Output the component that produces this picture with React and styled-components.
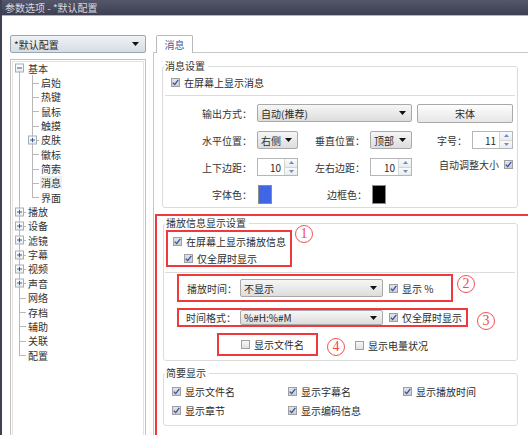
import React from 'react';
import styled, { createGlobalStyle } from 'styled-components';

const RED = '#ee3a3d';

const GlobalStyle = createGlobalStyle`
  html, body { margin: 0; padding: 0; background: #fff; overflow: hidden; }
  body {
    font-family: "Noto Sans CJK SC", "Noto Sans", sans-serif;
    font-size: 10px;
    color: #2b2b2b;
  }
  * { box-sizing: border-box; }
`;

const Window = styled.div`
  width: 528px;
  height: 435px;
  overflow: hidden;
  display: flex;
  flex-direction: column;
  border-left: 2px solid #3d4050;
  background: #fff;
`;

const TitleBar = styled.div`
  height: 16px;
  flex: none;
  padding-left: 3px;
  line-height: 15px;
  color: #d6d8e0;
  background: linear-gradient(#54576b, #3d4051);
  border-bottom: 1px solid #b4b6bc;
  white-space: nowrap;
`;

const Body = styled.div`
  flex: 1;
  min-height: 0;
  display: flex;
  gap: 7px;
  padding: 19px 0 0 8px;
`;

/* ---------- sidebar ---------- */
const Sidebar = styled.div`
  width: 136px;
  flex: none;
  display: flex;
  flex-direction: column;
  gap: 6px;
  margin-bottom: -12px;
`;

const ProfileSelect = styled.div`
  height: 18px;
  flex: none;
  display: flex;
  align-items: center;
  justify-content: space-between;
  padding: 0 6px 0 3px;
  border: 1px solid #9aa6b2;
  border-radius: 2px;
  background: linear-gradient(#f0f3f7, #d5dce4);
  white-space: nowrap;
`;

const TreeBox = styled.div`
  flex: 1;
  border: 1px solid #c2c2c2;
  box-shadow: inset 0 0 0 1px #fff, inset 0 0 0 2px #e3e3e3;
  padding: 1px 0 0 2px;
`;

const TreeRow = styled.div`
  display: flex;
  align-items: center;
  height: 14.35px;
  white-space: nowrap;
  color: #333;
`;

const Gutter = styled.span`
  position: relative;
  width: 13px;
  height: 100%;
  flex: none;
  &::before {
    content: '';
    position: absolute;
    left: 6px;
    border-left: 1px solid #b8b8b8;
    top: ${(p) => (p.$v === 'bottom' ? '50%' : '0')};
    bottom: ${(p) => (p.$v === 'top' ? '50%' : '0')};
    display: ${(p) => (p.$v ? 'block' : 'none')};
  }
  &::after {
    content: '';
    position: absolute;
    left: 6px;
    right: 0;
    top: 50%;
    border-top: 1px solid #b8b8b8;
    display: ${(p) => (p.$stub ? 'block' : 'none')};
  }
`;

const Expander = styled.span`
  position: absolute;
  left: 2px;
  top: 50%;
  transform: translateY(-50%);
  width: 9px;
  height: 9px;
  border: 1px solid #a6acb4;
  background: linear-gradient(#ffffff, #e8ecf0);
  z-index: 1;
  display: flex;
  align-items: center;
  justify-content: center;
`;

const TreeLabel = styled.span`
  margin-left: 1px;
  padding: 0 1px;
  line-height: 13px;
  background: ${(p) => (p.$sel ? '#eceef2' : 'transparent')};
`;

/* ---------- main ---------- */
const Main = styled.div`
  flex: 1;
  min-width: 0;
  display: flex;
  flex-direction: column;
`;

const TabStrip = styled.div`
  display: flex;
  padding-left: 3px;
  flex: none;
`;

const Tab = styled.div`
  width: 37px;
  height: 18px;
  border: 1px solid #b9b9b9;
  border-bottom: none;
  border-radius: 2px 2px 0 0;
  background: #fff;
  color: #3a5f9c;
  display: flex;
  align-items: center;
  justify-content: center;
  margin-bottom: -1px;
  position: relative;
  z-index: 1;
`;

const TabPanel = styled.div`
  flex: 1;
  border-top: 1px solid #c6c6c6;
  border-left: 1px solid #c6c6c6;
  padding: 13px 0 0 8px;
  display: flex;
  flex-direction: column;
  align-items: flex-start;
`;

const Group = styled.section`
  width: ${(p) => p.$w}px;
  flex: none;
  border: 1px solid #dcdcdc;
  border-radius: 3px;
  padding-bottom: ${(p) => p.$pb || 0}px;
  margin-top: ${(p) => p.$mt || 0}px;
  display: flex;
  flex-direction: column;
  align-items: flex-start;
  background: #fff;
`;

const GroupTitle = styled.div`
  margin: -7px 0 0 1px;
  padding: 0 3px 0 1px;
  height: 12px;
  line-height: 12px;
  background: #fff;
  white-space: nowrap;
  color: #333;
`;

const Separator = styled.div`
  align-self: stretch;
  height: 1px;
  background: #dcdcdc;
  margin: ${(p) => p.$m};
`;

const CheckRow = styled.div`
  display: flex;
  align-items: center;
  gap: 4px;
  height: 14px;
  white-space: nowrap;
  flex: none;
  margin: ${(p) => p.$m || '0'};
`;

const Box = styled.span`
  width: 9px;
  height: 9px;
  flex: none;
  border: 1px solid #a0a0a0;
  background: ${(p) =>
    p.$on ? 'linear-gradient(#e4e4e4, #cdcdcd)' : 'linear-gradient(#f7f7f7, #e0e0e0)'};
  display: flex;
  align-items: center;
  justify-content: center;
`;

const FormGrid = styled.div`
  display: grid;
  grid-template-columns: 89px 41px 62px 42px 50px 41px;
  grid-auto-rows: 18px;
  column-gap: 5px;
  row-gap: 9px;
  align-items: center;
  margin-top: 8px;
`;

const FormLabel = styled.span`
  justify-self: end;
  white-space: nowrap;
  color: #333;
  margin-right: ${(p) => p.$mr || 0}px;
`;

const Select = styled.div`
  height: ${(p) => p.$h || 18}px;
  width: ${(p) => (p.$w ? `${p.$w}px` : 'auto')};
  grid-column: ${(p) => (p.$span ? `span ${p.$span}` : 'auto')};
  flex: none;
  border: 1px solid #a9a9a9;
  border-radius: 2px;
  background: linear-gradient(#f6f6f6, #dddddd);
  display: flex;
  align-items: center;
  justify-content: space-between;
  padding: 0 5px 0 3px;
  white-space: nowrap;
  margin-right: ${(p) => p.$mr || 0}px;
`;

const PushButton = styled.div`
  grid-column: span 2;
  height: 19px;
  border: 1px solid #a9a9a9;
  border-radius: 2px;
  background: linear-gradient(#fdfdfd, #e6e6e6);
  display: flex;
  align-items: center;
  justify-content: center;
`;

const Spin = styled.div`
  height: 18px;
  border: 1px solid #b6b6b6;
  background: #fff;
  display: flex;
  align-items: stretch;
`;

const SpinValue = styled.span`
  flex: 1;
  text-align: right;
  padding-right: 3px;
  align-self: center;
`;

const SpinArrows = styled.span`
  width: 13px;
  display: flex;
  flex-direction: column;
  border-left: 1px solid #d6d6d6;
`;

const SpinBtn = styled.span`
  flex: 1;
  display: flex;
  align-items: center;
  justify-content: center;
  background: linear-gradient(#fafafa, #e9ecf0);
  & + & {
    border-top: 1px solid #d6d6d6;
  }
`;

const Swatch = styled.span`
  justify-self: start;
  margin-left: ${(p) => p.$ml || 0}px;
  width: 14px;
  height: 19px;
  border: 1px solid #8c8c8c;
  background: ${(p) => p.$c};
`;

const AutoSize = styled.div`
  grid-column: span 2;
  justify-self: end;
  display: flex;
  align-items: center;
  gap: 5px;
  margin-top: -5px;
  white-space: nowrap;
  color: #333;
`;

const HighlightFrame = styled.div`
  align-self: stretch;
  margin: 6px 0 0 -7px;
  border-top: 2px solid ${RED};
  border-left: 2px solid ${RED};
  padding: 0 0 40px 6px;
  display: flex;
  flex-direction: column;
  align-items: flex-start;
`;

const AnnotRow = styled.div`
  display: flex;
  align-items: flex-start;
  flex: none;
  margin: ${(p) => p.$m};
`;

const Annot = styled.div`
  width: ${(p) => p.$w}px;
  height: ${(p) => (p.$h ? `${p.$h}px` : 'auto')};
  flex: none;
  border: 2px solid ${RED};
  padding: ${(p) => p.$pad};
  display: flex;
  flex-direction: ${(p) => (p.$col ? 'column' : 'row')};
  align-items: ${(p) => (p.$col ? 'flex-start' : 'center')};
`;

const RowLabel = styled.span`
  width: ${(p) => p.$w}px;
  flex: none;
  white-space: nowrap;
  color: #333;
`;

const NumBadge = styled.span`
  width: 18px;
  height: 18px;
  flex: none;
  border: 1px solid #ef5255;
  border-radius: 50%;
  color: #ef4a4d;
  font-family: "Liberation Serif", "DejaVu Serif", serif;
  font-size: 14px;
  line-height: 1;
  display: flex;
  align-items: center;
  justify-content: center;
  margin: ${(p) => p.$m};
`;

const BriefGrid = styled.div`
  display: grid;
  grid-template-columns: 116px 115px auto;
  grid-auto-rows: 14px;
  row-gap: 5px;
  margin: 5px 0 0 8px;
`;

/* ---------- small drawings ---------- */
const DownArrow = () => (
  <svg width="7" height="4" viewBox="0 0 7 4">
    <path d="M0 0H7L3.5 4Z" fill="#111" />
  </svg>
);

const Check = () => (
  <svg width="7" height="7" viewBox="0 0 7 7">
    <path d="M0.8 3.6L2.7 5.6L6.3 0.9" fill="none" stroke="#2d4fae" strokeWidth="1.3" />
  </svg>
);

const PlusMinus = ({ plus }) => (
  <svg width="5" height="5" viewBox="0 0 5 5">
    <path d="M0 2.5H5" stroke="#3b5a8c" strokeWidth="1" />
    {plus && <path d="M2.5 0V5" stroke="#3b5a8c" strokeWidth="1" />}
  </svg>
);

const SpinTri = ({ up }) => (
  <svg width="5" height="3" viewBox="0 0 5 3">
    <path d={up ? 'M0 3H5L2.5 0Z' : 'M0 0H5L2.5 3Z'} fill="#6f8fc4" />
  </svg>
);

const CheckBox = ({ on, children, m }) => (
  <CheckRow $m={m}>
    <Box $on={on}>{on && <Check />}</Box>
    <span>{children}</span>
  </CheckRow>
);

const Dropdown = ({ children, ...rest }) => (
  <Select {...rest}>
    <span>{children}</span>
    <DownArrow />
  </Select>
);

const SpinBox = ({ value }) => (
  <Spin>
    <SpinValue>{value}</SpinValue>
    <SpinArrows>
      <SpinBtn>
        <SpinTri up />
      </SpinBtn>
      <SpinBtn>
        <SpinTri />
      </SpinBtn>
    </SpinArrows>
  </Spin>
);

/* ---------- tree data ---------- */
const children = ['启始', '热键', '鼠标', '触摸', '皮肤', '徽标', '简索', '消息', '界面'];
const topLevel = [
  ['播放', true],
  ['设备', true],
  ['滤镜', true],
  ['字幕', true],
  ['视频', true],
  ['声音', true],
  ['网络', false],
  ['存档', false],
  ['辅助', false],
  ['关联', false],
  ['配置', false],
];

const Tree = () => (
  <TreeBox>
    <TreeRow>
      <Gutter $v="bottom">
        <Expander>
          <PlusMinus />
        </Expander>
      </Gutter>
      <TreeLabel>基本</TreeLabel>
    </TreeRow>
    {children.map((c, i) => (
      <TreeRow key={c}>
        <Gutter $v="full" />
        <Gutter $v={i === children.length - 1 ? 'top' : 'full'} $stub>
          {c === '皮肤' && (
            <Expander>
              <PlusMinus plus />
            </Expander>
          )}
        </Gutter>
        <TreeLabel $sel={c === '消息'}>{c}</TreeLabel>
      </TreeRow>
    ))}
    {topLevel.map(([t, exp], i) => (
      <TreeRow key={t}>
        <Gutter $v={i === topLevel.length - 1 ? 'top' : 'full'} $stub>
          {exp && (
            <Expander>
              <PlusMinus plus />
            </Expander>
          )}
        </Gutter>
        <TreeLabel>{t}</TreeLabel>
      </TreeRow>
    ))}
  </TreeBox>
);

export default function App() {
  return (
    <>
      <GlobalStyle />
      <Window>
        <TitleBar>参数选项 - *默认配置</TitleBar>
        <Body>
          <Sidebar>
            <ProfileSelect>
              <span>*默认配置</span>
              <DownArrow />
            </ProfileSelect>
            <Tree />
          </Sidebar>

          <Main>
            <TabStrip>
              <Tab>消息</Tab>
            </TabStrip>
            <TabPanel>
              <Group $w={356} $pb={4}>
                <GroupTitle>消息设置</GroupTitle>
                <CheckBox on m="3px 0 0 8px">在屏幕上显示消息</CheckBox>
                <Separator $m="6px 2px 0 2px" />
                <FormGrid>
                  <FormLabel>输出方式：</FormLabel>
                  <Dropdown $span={3}>自动(推荐)</Dropdown>
                  <PushButton>宋体</PushButton>

                  <FormLabel>水平位置：</FormLabel>
                  <Dropdown>右侧</Dropdown>
                  <FormLabel>垂直位置：</FormLabel>
                  <Dropdown>顶部</Dropdown>
                  <FormLabel>字号：</FormLabel>
                  <SpinBox value="11" />

                  <FormLabel>上下边距：</FormLabel>
                  <SpinBox value="10" />
                  <FormLabel>左右边距：</FormLabel>
                  <SpinBox value="10" />
                  <AutoSize>
                    <span>自动调整大小</span>
                    <Box $on>
                      <Check />
                    </Box>
                  </AutoSize>

                  <FormLabel>字体色：</FormLabel>
                  <Swatch $c="#3f66e4" $ml={1} />
                  <FormLabel $mr={-2}>边框色：</FormLabel>
                  <Swatch $c="#000" $ml={2} />
                </FormGrid>
              </Group>

              <HighlightFrame>
                <Group $w={355} $mt={7} $pb={4}>
                  <GroupTitle>播放信息显示设置</GroupTitle>
                  <AnnotRow $m="1px 0 0 2px">
                    <Annot $w={126} $col $pad="2px 0 0 5px">
                      <CheckBox on>在屏幕上显示播放信息</CheckBox>
                      <CheckBox on m="3px 0 0 11px">仅全屏时显示</CheckBox>
                    </Annot>
                    <NumBadge $m="-5px 0 0 3px">1</NumBadge>
                  </AnnotRow>
                  <Separator $m="5px 2px 0 1px" />
                  <AnnotRow $m="1px 0 0 13px">
                    <Annot $w={276} $h={28} $pad="0 0 0 8px">
                      <RowLabel $w={53}>播放时间：</RowLabel>
                      <Dropdown $w={143} $mr={6}>不显示</Dropdown>
                      <CheckBox on>显示 %</CheckBox>
                    </Annot>
                    <NumBadge $m="1px 0 0 4px">2</NumBadge>
                  </AnnotRow>
                  <AnnotRow $m="6px 0 0 13px">
                    <Annot $w={291} $h={19} $pad="0 0 0 7px">
                      <RowLabel $w={54}>时间格式：</RowLabel>
                      <Dropdown $w={143} $h={15} $mr={6}>%#H:%#M</Dropdown>
                      <CheckBox on>仅全屏时显示</CheckBox>
                    </Annot>
                    <NumBadge $m="4px 0 0 9px">3</NumBadge>
                  </AnnotRow>
                  <AnnotRow $m="3px 0 0 53px">
                    <Annot $w={101} $h={23} $pad="0 0 0 22px">
                      <CheckBox>显示文件名</CheckBox>
                    </Annot>
                    <NumBadge $m="5px 0 0 9px">4</NumBadge>
                    <CheckBox m="5px 0 0 10px">显示电量状况</CheckBox>
                  </AnnotRow>
                </Group>

                <Group $w={355} $mt={12} $pb={8}>
                  <GroupTitle>简要显示</GroupTitle>
                  <BriefGrid>
                    <CheckBox on>显示文件名</CheckBox>
                    <CheckBox on>显示字幕名</CheckBox>
                    <CheckBox on>显示播放时间</CheckBox>
                    <CheckBox on>显示章节</CheckBox>
                    <CheckBox on>显示编码信息</CheckBox>
                  </BriefGrid>
                </Group>
              </HighlightFrame>
            </TabPanel>
          </Main>
        </Body>
      </Window>
    </>
  );
}
